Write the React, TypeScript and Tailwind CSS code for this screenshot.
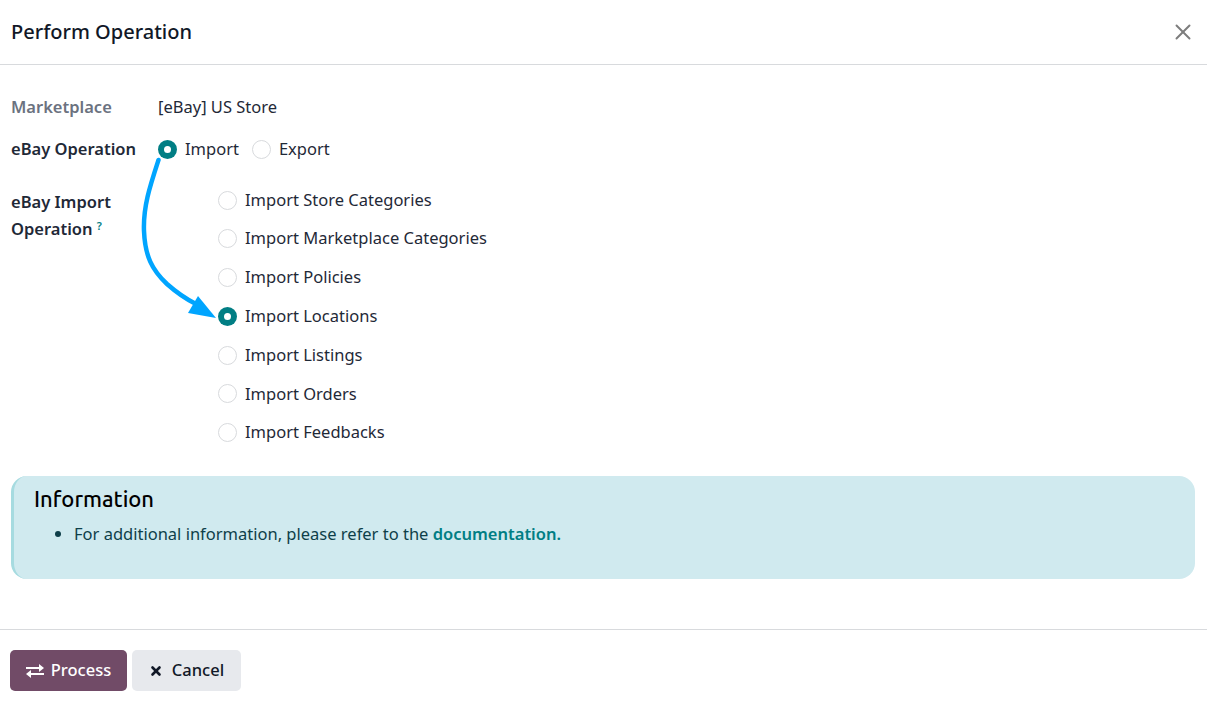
import { X, X as CloseIcon } from 'lucide-react';

const importOptions = [
  { label: 'Import Store Categories', checked: false },
  { label: 'Import Marketplace Categories', checked: false },
  { label: 'Import Policies', checked: false },
  { label: 'Import Locations', checked: true },
  { label: 'Import Listings', checked: false },
  { label: 'Import Orders', checked: false },
  { label: 'Import Feedbacks', checked: false },
];

const Radio = ({ checked }: { checked: boolean }) =>
  checked ? (
    <span className="flex h-[19px] w-[19px] shrink-0 items-center justify-center rounded-full bg-[#017e84]">
      <span className="h-[7px] w-[7px] rounded-full bg-white" />
    </span>
  ) : (
    <span className="h-[19px] w-[19px] shrink-0 rounded-full border border-[#d8dadd] bg-white" />
  );

const App = () => {
  return (
    <div className="relative flex h-[702px] w-[1207px] flex-col overflow-hidden bg-white font-['Noto_Sans',sans-serif] text-[16.5px] text-[#1f2937]">
      {/* Header */}
      <header className="flex h-[65px] shrink-0 items-center justify-between border-b border-[#d8dadd] pl-[11px] pr-[11px]">
        <h1 className="text-[20px] font-medium text-[#111827]">Perform Operation</h1>
        <CloseIcon className="h-[26px] w-[26px] text-[#7d7d7d]" strokeWidth={1.8} />
      </header>

      {/* Form */}
      <main className="flex flex-1 flex-col px-[11px] pt-[30px]">
        <div className="flex h-[24px] items-center">
          <span className="w-[147px] font-semibold text-[#6b7280]">Marketplace</span>
          <span>[eBay] US Store</span>
        </div>
        <div className="mt-[18px] flex h-[24px] items-center">
          <span className="w-[147px] font-semibold">eBay Operation</span>
          <span className="flex items-center gap-[8px]">
            <Radio checked />
            <span>Import</span>
          </span>
          <span className="ml-[13px] flex items-center gap-[8px]">
            <Radio checked={false} />
            <span>Export</span>
          </span>
        </div>
        <div className="mt-[27px] flex">
          <div className="w-[207px] font-semibold leading-[27px]">
            eBay Import
            <br />
            Operation <sup className="text-[11px] font-semibold text-[#017e84]">?</sup>
          </div>
          <ul className="flex flex-col gap-[14.8px]">
            {importOptions.map((option) => (
              <li key={option.label} className="flex h-[24px] items-center gap-[8px]">
                <Radio checked={option.checked} />
                <span>{option.label}</span>
              </li>
            ))}
          </ul>
        </div>

        {/* Information */}
        <section className="mt-[31px] h-[103px] w-[1184px] rounded-[16px] border-l-[3px] border-[#a6dbe0] bg-[#d0eaef] pl-[20px] pt-[9px]">
          <h2 className="font-['Ubuntu','Noto_Sans',sans-serif] text-[22px] font-medium leading-[28px] text-black">Information</h2>
          <ul className="mt-[9px] list-disc pl-[40px] text-[#0e3f49] marker:text-[#0e3f49]">
            <li>
              For additional information, please refer to the{' '}
              <a className="font-semibold text-[#017e84]">documentation.</a>
            </li>
          </ul>
        </section>
      </main>

      {/* Footer */}
      <footer className="flex h-[73px] shrink-0 items-start gap-[5px] border-t border-[#d8dadd] pl-[10px] pt-[20px]">
        <button className="flex h-[41px] w-[117px] items-center justify-center gap-[7px] rounded-[5px] bg-[#714b67] font-medium text-white">
          <svg viewBox="0 0 18 14" className="h-[14px] w-[18px]" fill="currentColor">
            <path d="M0 3h13V0l5 4-5 4V5H0zM18 9H5V6l-5 4 5 4v-3h13z" />
          </svg>
          Process
        </button>
        <button className="flex h-[41px] w-[109px] items-center justify-center gap-[9px] rounded-[5px] bg-[#e7e9ed] font-medium text-[#111827]">
          <X className="h-[14px] w-[14px]" strokeWidth={4.5} />
          Cancel
        </button>
      </footer>

      {/* Annotation arrow */}
      <svg className="pointer-events-none absolute left-0 top-0" width="1207" height="702" fill="none">
        <path d="M158.5 160C150 186 143 207 144 231C145 256 152 270 167 284C176 292 186 299 196 304" stroke="#00a5ff" strokeWidth="4.5" strokeLinecap="round" />
        <path d="M198 296L188 313L216 318Z" fill="#00a5ff" />
      </svg>
    </div>
  );
};

export default App;
